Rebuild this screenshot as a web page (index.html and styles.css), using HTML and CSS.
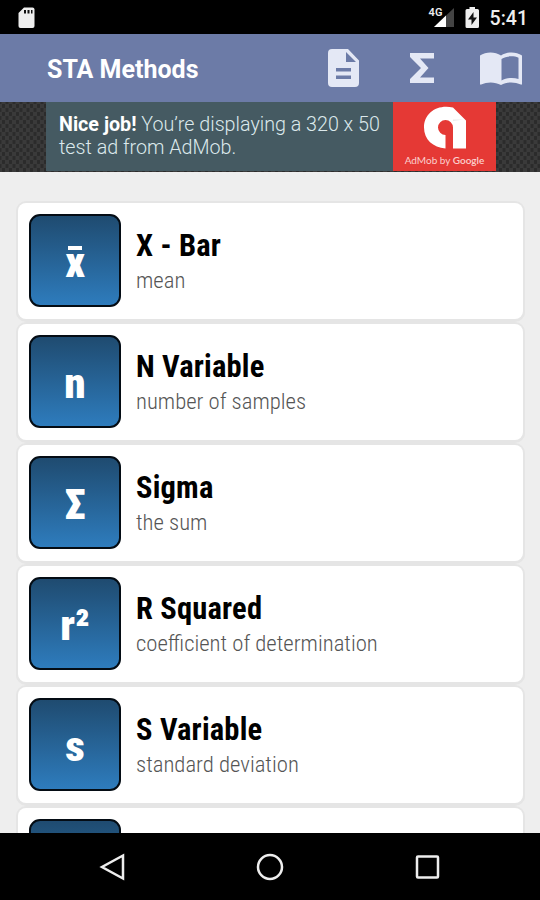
FILE: index.html
```html
<!DOCTYPE html>
<html lang="en">
<head>
    <meta charset="UTF-8">
    <meta name="viewport" content="width=device-width, initial-scale=1.0">
    <title>STA Methods</title>
    <link rel="stylesheet" href="styles.css">
</head>
<body>
    <div class="status-bar">
        <svg class="sd-card" width="18" height="22" viewBox="0 0 18 22">
            <path fill="#eee" d="M6 0.5h8.5a2 2 0 0 1 2 2V19a2 2 0 0 1-2 2h-12a2 2 0 0 1-2-2V6z"/>
            <path fill="#111" d="M6 3h2v3.500H6zM9.500 3h2v3.500h-2zM13 3h1.500v3.500H13z"/>
        </svg>
        <div class="status-right">
            <div class="signal">
                <svg width="21" height="21" viewBox="0 0 21 21">
                    <path fill="#444" d="M20 1v19H0z"/>
                    <path fill="#fff" d="M12 8.600V20H0z"/>
                </svg>
                <span class="network">4G</span>
            </div>
            <svg class="battery" width="15" height="22" viewBox="0 0 15 22">
                <path fill="#eee" d="M4.500 0h5.500v2h2.500a1.500 1.500 0 0 1 1.500 1.500v16a1.500 1.500 0 0 1-1.500 1.500H2A1.500 1.500 0 0 1 .5 19.500v-16A1.500 1.500 0 0 1 2 2h2.500z"/>
                <path fill="#111" d="M8.500 5L3 12.500h3.500V18L12 10.500H8.500z"/>
            </svg>
            <span class="clock">5:41</span>
        </div>
    </div>

    <header class="app-bar">
        <h1>STA Methods</h1>
        <div class="actions">
            <svg width="31" height="38" viewBox="0 0 31 38">
                <path fill="#e4e8f5" fill-rule="evenodd" d="M4 0h16l11 11.500V34a4 4 0 0 1-4 4H4a4 4 0 0 1-4-4V4a4 4 0 0 1 4-4zM18 3v10h10zM8 19v3.500h15V19zM8 26.500V30h15v-3.500z"/>
            </svg>
            <svg width="24" height="30" viewBox="0 0 24 30">
                <path fill="#e4e8f5" d="M0 0h24v5.500H10L18.500 15 10 24.500h14V30H0v-4l11-11L0 4z"/>
            </svg>
            <svg width="42" height="33" viewBox="0 0 42 33">
                <path fill="#e4e8f5" fill-rule="evenodd" d="M0 3.500C6-.5 15-.5 21 3.500 27-.5 36-.5 42 3.500V32c0 .6-.6.9-1.200.6-6-3-14-3-19.800.4-6-3.400-14-3.400-19.800-.4C.6 32.900 0 32.600 0 32zM38.500 5.800c-5-2.200-12-2-17 1.300V28.500c5-3 12-3.300 17-1.500z"/>
            </svg>
        </div>
    </header>

    <div class="ad-strip">
        <div class="ad">
            <p><b>Nice job!</b> You’re displaying a 320 x 50<br>test ad from AdMob.</p>
            <div class="ad-logo">
                <svg width="44" height="43" viewBox="0 0 44 43">
                    <path fill="#fff" d="M22.500 42.500V29a7.500 7.500 0 1 1 7.500-7.500V42.500H43V14.500L30 1.500C14-2 1 7 1 21.500c0 12 9 20 21.500 21z"/>
                    <path fill="#d5d5d5" d="M30 14.500V13.700h11z"/>
                </svg>
                <span>AdMob by <b>Google</b></span>
            </div>
        </div>
    </div>

    <main class="list">
        <div class="card">
            <div class="tile"><span class="mean">x</span></div>
            <div class="info"><h2>X - Bar</h2><p>mean</p></div>
        </div>
        <div class="card">
            <div class="tile"><span>n</span></div>
            <div class="info"><h2>N Variable</h2><p>number of samples</p></div>
        </div>
        <div class="card">
            <div class="tile"><span>Σ</span></div>
            <div class="info"><h2>Sigma</h2><p>the sum</p></div>
        </div>
        <div class="card">
            <div class="tile"><span>r²</span></div>
            <div class="info"><h2>R Squared</h2><p>coefficient of determination</p></div>
        </div>
        <div class="card">
            <div class="tile"><span>s</span></div>
            <div class="info"><h2>S Variable</h2><p>standard deviation</p></div>
        </div>
        <div class="card">
            <div class="tile"></div>
        </div>
    </main>

    <nav class="nav-bar">
        <svg width="28" height="28" viewBox="0 0 28 28"><path d="M24 2.500v23L3 14z"/></svg>
        <svg width="28" height="28" viewBox="0 0 28 28"><circle cx="14" cy="14" r="12"/></svg>
        <svg width="28" height="28" viewBox="0 0 28 28"><rect x="4" y="3.500" width="21" height="21" rx="1"/></svg>
    </nav>
</body>
</html>
```

FILE: styles.css
```css
* {
    box-sizing: border-box;
}
body {
    margin: 0;
    height: 900px;
    display: flex;
    flex-direction: column;
    overflow: hidden;
    background: #eee;
    font-family: Roboto, sans-serif;
}
h1, h2, p {
    margin: 0;
}
svg {
    display: block;
    flex: none;
}

/* status bar */
.status-bar {
    height: 34px;
    flex: none;
    display: flex;
    justify-content: space-between;
    padding: 7px 12px 0 18px;
    background: #000;
    color: #eee;
}
.status-right {
    display: flex;
}
.signal {
    position: relative;
    margin-right: 10px;
}
.network {
    position: absolute;
    left: -5px;
    top: 0;
    font-size: 11px;
    font-weight: 600;
    line-height: 12px;
    font-stretch: 88%;
}
.clock {
    margin-left: 10px;
    font-size: 19.5px;
    font-weight: 500;
    line-height: 23px;
}

/* title bar */
.app-bar {
    height: 68px;
    flex: none;
    display: flex;
    align-items: center;
    justify-content: space-between;
    padding: 0 18px 0 47px;
    background: #6c7ba7;
}
.app-bar h1 {
    color: #fff;
    font-size: 25px;
    font-weight: 700;
    line-height: 30px;
    padding-top: 3px;
}
.actions {
    display: flex;
    align-items: center;
    gap: 51px;
}
.actions svg:last-child {
    margin-left: -5px;
}

/* banner ad */
.ad-strip {
    height: 70px;
    flex: none;
    padding: 0 44px 0 46px;
    background-color: #3a3a3a;
    background-image: radial-gradient(#2b2b2b 1.6px, transparent 2px), radial-gradient(#2b2b2b 1.6px, transparent 2px);
    background-size: 7px 8px;
    background-position: 0 0, 3.5px 4px;
}
.ad {
    height: 69px;
    display: flex;
    background: #455a62;
}
.ad p {
    flex: 1;
    padding: 11px 0 0 13px;
    color: #dce9ec;
    font-size: 19.7px;
    font-weight: 300;
    line-height: 23px;
    white-space: nowrap;
}
.ad p b {
    color: #fff;
    font-weight: 700;
}
.ad-logo {
    width: 103px;
    flex: none;
    display: flex;
    flex-direction: column;
    align-items: center;
    padding-top: 4px;
    background: #e53935;
    color: #fbd0ce;
}
.ad-logo span {
    margin-top: 5px;
    font-family: Lato, sans-serif;
    font-size: 10px;
    line-height: 13px;
    white-space: nowrap;
}
.ad-logo b {
    font-weight: 600;
}

/* method list */
.list {
    flex: 1;
    min-height: 0;
    overflow: hidden;
    display: flex;
    flex-direction: column;
    gap: 5px;
    padding: 31px 17px 0 18px;
}
.card {
    height: 116px;
    flex: none;
    display: flex;
    padding: 11px;
    background: #fff;
    border-radius: 8px;
    box-shadow: 0 0 0 2px #e5e5e5, 0 1px 0 2px #e5e5e5;
}
.tile {
    width: 92px;
    height: 93px;
    flex: none;
    display: flex;
    justify-content: center;
    padding-top: 20px;
    border: 2px solid #040c14;
    border-radius: 11px;
    background: linear-gradient(#1f4b70, #2e7cbd);
    color: #fff;
    font-size: 43px;
    font-weight: 900;
    font-stretch: 75%;
    line-height: 52px;
}
.mean {
    position: relative;
}
/* the bar over the x */
.mean::before {
    content: "";
    position: absolute;
    left: 3px;
    right: 3px;
    top: 10px;
    height: 4px;
    background: #fff;
}
.info {
    padding: 14px 0 0 15px;
    font-stretch: 75%;
    white-space: nowrap;
}
.info h2 {
    color: #000;
    font-size: 30.500px;
    font-weight: 700;
    line-height: 36px;
    letter-spacing: 0.2px;
}
.info p {
    color: #555;
    font-size: 22.700px;
    font-weight: 350;
    line-height: 34px;
}

/* system navigation */
.nav-bar {
    height: 67px;
    flex: none;
    display: flex;
    justify-content: center;
    align-items: center;
    gap: 129px;
    background: #000;
}
.nav-bar svg {
    fill: none;
    stroke: #eee;
    stroke-width: 2.500;
}
```
